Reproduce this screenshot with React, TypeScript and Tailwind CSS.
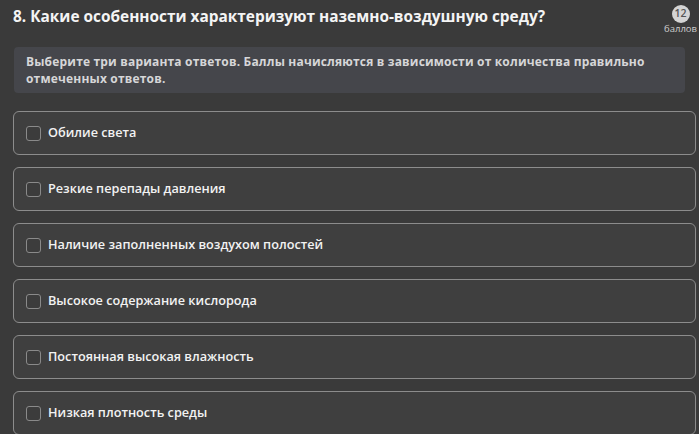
import React from "react";

const options = [
  "Обилие света",
  "Резкие перепады давления",
  "Наличие заполненных воздухом полостей",
  "Высокое содержание кислорода",
  "Постоянная высокая влажность",
  "Низкая плотность среды",
];

export default function App() {
  return (
    <div
      className="w-[699px] h-[434px] overflow-hidden bg-[#3a3a3a] text-white"
      style={{ fontFamily: '"Open Sans", "Noto Sans", sans-serif' }}
    >
      <div className="flex items-start justify-between pl-[13px] pr-[2px] pt-[5px]">
        <h1 className="text-[15.4px] font-bold leading-[24px] text-[#f4f4f4]">
          8. Какие особенности характеризуют наземно-воздушную среду?
        </h1>
        <div className="flex flex-col items-center">
          <div className="w-[18px] h-[18px] rounded-full bg-[#d4d4d4] text-[#555] text-[10.5px] font-semibold flex items-center justify-center">
            12
          </div>
          <div className="text-[9.5px] leading-[12px] text-[#cfcfcf]">баллов</div>
        </div>
      </div>
      <div className="mx-[14px] mt-[12px] rounded-[4px] bg-[#45464b] px-[12px] py-[6px] text-[12px] font-bold leading-[17px] tracking-[0.18px] text-[#d6d6d8]">
        Выберите три варианта ответов. Баллы начисляются в зависимости от количества правильно отмеченных ответов.
      </div>
      <div className="flex flex-col gap-[12px] ml-[13px] mr-[3px] mt-[18px]">
        {options.map((o) => (
          <div
            key={o}
            className="h-[44px] shrink-0 rounded-[6px] border-[1.5px] border-[#8c8c8c] bg-[#3f3f3f] flex items-center pl-[12px]"
          >
            <div className="w-[15px] h-[15px] rounded-[3px] border-[1.5px] border-[#8a8a8a] bg-[#3c3c3c]" />
            <span className="ml-[7px] text-[12.7px] font-semibold text-[#f2f2f2]">{o}</span>
          </div>
        ))}
      </div>
    </div>
  );
}
